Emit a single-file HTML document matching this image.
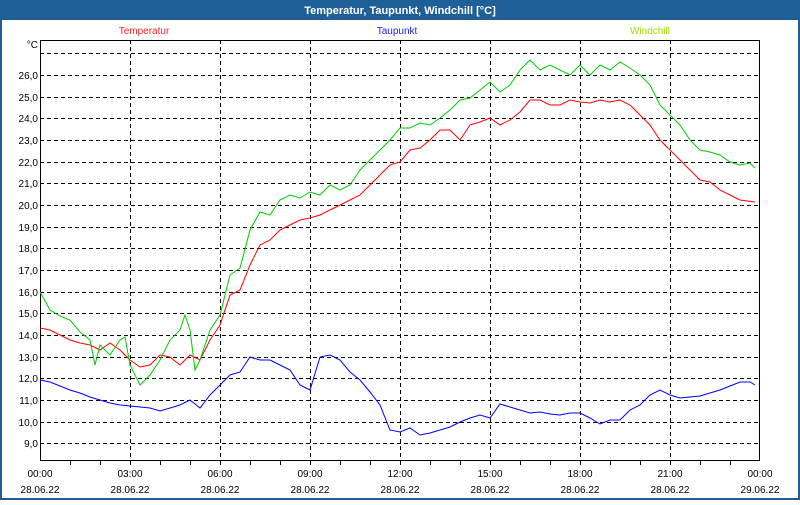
<!DOCTYPE html>
<html><head><style>
body{margin:0;width:800px;height:500px;overflow:hidden;background:#fff;font-family:"Liberation Sans",sans-serif}
</style></head><body>
<svg width="800" height="500" xmlns="http://www.w3.org/2000/svg" font-family="Liberation Sans, sans-serif">
<rect x="0" y="0" width="800" height="500" fill="#1d5f96"/>
<rect x="2" y="20" width="796" height="478" fill="#fff"/>
<text x="400" y="14" fill="#fff" font-size="11" font-weight="bold" text-anchor="middle">Temperatur, Taupunkt, Windchill [°C]</text>
<text x="144" y="34" fill="#ff2020" font-size="10" text-anchor="middle">Temperatur</text>
<text x="397" y="34" fill="#2020ff" font-size="10" text-anchor="middle">Taupunkt</text>
<text x="650" y="34" fill="#a0e000" font-size="10" text-anchor="middle">Windchill</text>
<text x="38" y="48" font-size="10" text-anchor="end">°C</text>
<g stroke="#000" stroke-dasharray="4,3" stroke-width="1">
<path d="M40 53.5H760M40 75.5H760M40 97.5H760M40 118.5H760M40 140.5H760M40 162.5H760M40 183.5H760M40 205.5H760M40 227.5H760M40 248.5H760M40 270.5H760M40 292.5H760M40 313.5H760M40 335.5H760M40 357.5H760M40 378.5H760M40 400.5H760M40 422.5H760M40 443.5H760"/>
<path d="M130.5 40V460M220.5 40V460M310.5 40V460M400.5 40V460M490.5 40V460M580.5 40V460M670.5 40V460"/>
</g>
<rect x="40.5" y="40.5" width="719" height="420" fill="none" stroke="#000"/>
<path stroke="#000" d="M70.5 460v5M100.5 460v5M130.5 460v5M160.5 460v5M190.5 460v5M220.5 460v5M250.5 460v5M280.5 460v5M310.5 460v5M340.5 460v5M370.5 460v5M400.5 460v5M430.5 460v5M460.5 460v5M490.5 460v5M520.5 460v5M550.5 460v5M580.5 460v5M610.5 460v5M640.5 460v5M670.5 460v5M700.5 460v5M730.5 460v5"/>
<g font-size="10" text-anchor="end">
<text x="38" y="79">26,0</text><text x="38" y="101">25,0</text><text x="38" y="122">24,0</text><text x="38" y="144">23,0</text><text x="38" y="166">22,0</text><text x="38" y="187">21,0</text><text x="38" y="209">20,0</text><text x="38" y="231">19,0</text><text x="38" y="252">18,0</text><text x="38" y="274">17,0</text><text x="38" y="296">16,0</text><text x="38" y="317">15,0</text><text x="38" y="339">14,0</text><text x="38" y="361">13,0</text><text x="38" y="382">12,0</text><text x="38" y="404">11,0</text><text x="38" y="426">10,0</text><text x="38" y="447">9,0</text>
</g>
<g font-size="10" text-anchor="middle">
<text x="40" y="477">00:00</text><text x="130" y="477">03:00</text><text x="220" y="477">06:00</text><text x="310" y="477">09:00</text><text x="400" y="477">12:00</text><text x="490" y="477">15:00</text><text x="580" y="477">18:00</text><text x="670" y="477">21:00</text><text x="760" y="477">00:00</text>
<text x="40" y="493">28.06.22</text><text x="130" y="493">28.06.22</text><text x="220" y="493">28.06.22</text><text x="310" y="493">28.06.22</text><text x="400" y="493">28.06.22</text><text x="490" y="493">28.06.22</text><text x="580" y="493">28.06.22</text><text x="670" y="493">28.06.22</text><text x="760" y="493">29.06.22</text>
</g>
<g fill="none" stroke-width="1">
<polyline stroke="#0000ff" points="40,380 50,382 60,386 70,390 80,393 90,397 100,400 110,403 120,405 130,406 140,407 150,408 160,411 170,408 180,405 190,400 200,408 210,395 220,385 230,375 240,372 250,357 260,360 270,360 280,365 290,370 300,385 310,390 320,357 330,355 340,360 350,372 360,380 370,392 380,405 390,430 400,432 410,428 420,435 430,433 440,430 450,427 460,422 470,418 480,415 490,418 500,404 510,407 520,410 530,413 540,412 550,414 560,415 570,413 580,413 590,418 600,424 610,420 620,420 630,410 640,405 650,395 660,390 670,395 680,398 690,397 700,396 710,393 720,390 730,386 740,382 750,382 755,385"/>
<polyline stroke="#ff0000" points="40,328 50,330 60,335 70,340 80,343 90,345 100,350 110,343 120,350 130,360 140,367 150,365 160,355 170,357 180,365 190,355 200,360 210,340 220,325 230,295 240,290 250,265 260,245 270,240 280,230 290,225 300,220 310,218 320,215 330,210 340,205 350,200 360,195 370,185 380,175 390,165 400,162 410,150 420,148 430,140 440,130 450,130 460,140 470,125 480,122 490,118 500,125 510,120 520,112 530,100 540,100 550,105 560,105 570,100 580,102 590,103 600,100 610,102 620,100 630,105 640,115 650,125 660,140 670,150 680,160 690,170 700,180 710,182 720,190 730,195 740,200 755,202"/>
<polyline stroke="#00cc00" points="40,292 50,310 60,316 70,320 80,332 90,340 95,365 100,345 110,355 120,340 125,337 130,365 140,385 150,375 160,360 170,340 180,330 185,315 190,330 195,370 200,360 210,330 220,315 230,275 240,268 250,230 260,212 270,215 280,200 290,195 300,198 310,192 320,195 330,185 340,190 350,185 360,170 370,160 380,150 390,140 400,128 410,128 420,123 430,125 440,118 450,110 460,100 470,98 480,90 490,82 500,92 510,85 520,70 530,60 540,70 550,65 560,70 570,75 580,65 590,75 600,65 610,70 620,62 630,68 640,75 650,85 660,105 670,115 680,125 690,140 700,150 710,152 720,155 730,162 740,165 750,163 755,168"/>
</g>
</svg>
</body></html>
